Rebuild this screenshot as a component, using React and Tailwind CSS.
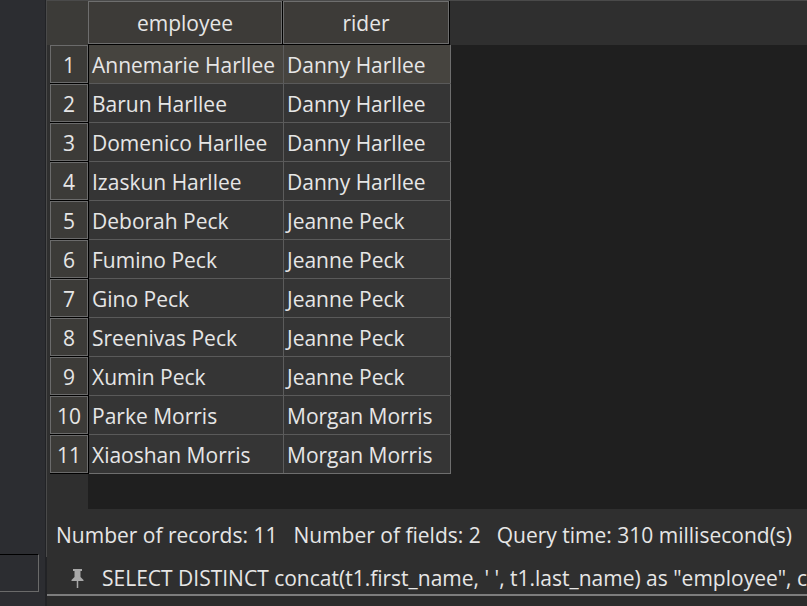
import React from 'react';

const rows = [
  ['Annemarie Harllee', 'Danny Harllee'],
  ['Barun Harllee', 'Danny Harllee'],
  ['Domenico Harllee', 'Danny Harllee'],
  ['Izaskun Harllee', 'Danny Harllee'],
  ['Deborah Peck', 'Jeanne Peck'],
  ['Fumino Peck', 'Jeanne Peck'],
  ['Gino Peck', 'Jeanne Peck'],
  ['Sreenivas Peck', 'Jeanne Peck'],
  ['Xumin Peck', 'Jeanne Peck'],
  ['Parke Morris', 'Morgan Morris'],
  ['Xiaoshan Morris', 'Morgan Morris'],
];

const PinIcon = () => (
  <svg width="13" height="19" viewBox="0 0 13 19" className="shrink-0 text-[#a8a8a8]" fill="currentColor">
    <rect x="2" y="0" width="9" height="2" />
    <rect x="3.5" y="2" width="6" height="6" />
    <path d="M3.5 8 L9.5 8 L12.5 11 L12.5 12 L0.5 12 L0.5 11 Z" />
    <rect x="5.75" y="12" width="1.5" height="7" />
  </svg>
);

export default function App() {
  return (
    <div
      className="flex h-[606px] w-[807px] overflow-hidden bg-[#2b2b2b] text-[21px] text-[#e6e6e6]"
      style={{ fontFamily: '"Open Sans", "Noto Sans", sans-serif' }}
    >
      {/* left dock */}
      <aside className="flex w-[45px] shrink-0 flex-col justify-end bg-[#2c2d31] pb-[14px]">
        <div className="h-[38px] w-[39px] border border-l-0 border-[#6a6a6a] border-t-black" />
      </aside>
      <div className="w-px shrink-0 bg-[#222326]" />
      <div className="flex w-px shrink-0 flex-col bg-[#222326]">
        <div className="h-[557px] bg-[#4a4a4a]" />
      </div>

      <main className="flex min-w-0 flex-1 flex-col">
        {/* result grid */}
        <section className="flex h-[509px] shrink-0 flex-col border-t border-[#4a4a4a] bg-[#2f2f2f]">
          <div className="flex h-[44px] shrink-0">
            <div className="w-[41px] shrink-0 bg-[#3c3b38]" />
            <div className="flex gap-px bg-black pb-px pr-px">
              <div className="flex w-[194px] items-center justify-center border border-[#6e6e6e] bg-[#3d3b38] pt-[3px]">
                employee
              </div>
              <div className="flex w-[166px] items-center justify-center border border-[#6e6e6e] bg-[#3d3b38] pt-[3px]">
                rider
              </div>
            </div>
          </div>

          <div className="flex min-h-0 flex-1">
            <div className="flex w-[41px] shrink-0 flex-col pl-[3px]">
              {rows.map((_, i) => (
                <div key={i} className="h-[39px] border-b border-black">
                  <div className="flex h-[38px] w-[38px] items-center justify-center border border-[#6b6b6b] bg-[#3c3b38] pt-[3px]">
                    {i + 1}
                  </div>
                </div>
              ))}
            </div>

            <div className="flex-1 bg-[#1f1f1f]">
              <div className="w-[363px] border-l border-black">
                {rows.map(([emp, rider], i) => (
                  <div
                    key={i}
                    className={`flex h-[39px] border-b ${i === rows.length - 1 ? 'border-[#6e6e6e]' : 'border-[#5a5a5a]'} ${i === 0 ? 'bg-[#46443f]' : 'bg-[#353535]'}`}
                  >
                    <div className="flex w-[195px] items-center whitespace-nowrap border-r border-[#5c5c5c] pl-[3px] pt-[3px]">
                      {emp}
                    </div>
                    <div className="flex w-[167px] items-center whitespace-nowrap border-r border-[#6e6e6e] pl-[3px] pt-[3px]">
                      {rider}
                    </div>
                  </div>
                ))}
              </div>
            </div>
          </div>
        </section>

        {/* status */}
        <div className="flex h-[47px] shrink-0 items-center gap-[16px] whitespace-nowrap bg-[#2f2f2f] pl-[9px] pt-[6px]">
          <span>Number of records: 11</span>
          <span>Number of fields: 2</span>
          <span>Query time: 310 millisecond(s)</span>
        </div>

        {/* last query */}
        <div className="flex h-[40px] shrink-0 items-center gap-[18px] overflow-hidden whitespace-nowrap border-b-2 border-[#7d7d7d] bg-[#2f2f2f] pl-[24px] pt-[7px]">
          <PinIcon />
          <span>SELECT DISTINCT concat(t1.first_name, ' ', t1.last_name) as "employee", concat(t2.first_name, ' ', t2.last_name) as "rider"</span>
        </div>
      </main>
    </div>
  );
}
